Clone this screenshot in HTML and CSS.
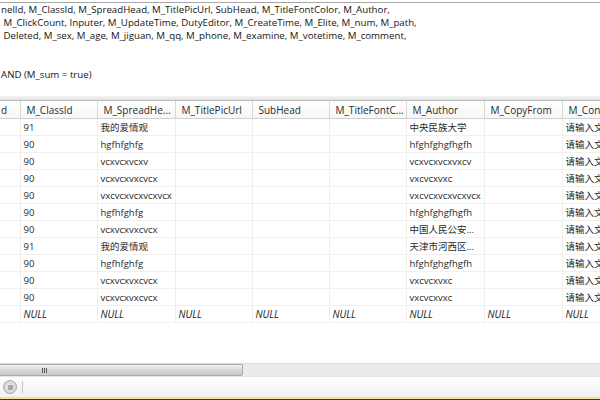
FILE: index.html
```html
<!DOCTYPE html>
<html>
<head>
<meta charset="utf-8">
<link rel="stylesheet" href="styles.css">
</head>
<body>
<div class="app">
  <div class="editor">
    <div class="line">nelId, M_ClassId, M_SpreadHead, M_TitlePicUrl, SubHead, M_TitleFontColor, M_Author,</div>
    <div class="line">&nbsp;M_ClickCount, Inputer, M_UpdateTime, DutyEditor, M_CreateTime, M_Elite, M_num, M_path,</div>
    <div class="line">&nbsp;Deleted, M_sex, M_age, M_jiguan, M_qq, M_phone, M_examine, M_votetime, M_comment,</div>
    <div class="line">&nbsp;</div>
    <div class="line">&nbsp;</div>
    <div class="line">AND (M_sum = true)</div>
  </div>
  <div class="splitter"></div>
  <div class="grid">
    <table>
      <colgroup>
        <col class="c0"><col class="c1"><col class="c2"><col class="c3"><col class="c4"><col class="c5"><col class="c6"><col class="c7"><col class="c8">
      </colgroup>
      <thead>
        <tr><th class="first">d</th><th>M_ClassId</th><th>M_SpreadHe...</th><th>M_TitlePicUrl</th><th>SubHead</th><th>M_TitleFontC...</th><th>M_Author</th><th>M_CopyFrom</th><th>M_Cont</th></tr>
      </thead>
      <tbody>
        <tr><td></td><td>91</td><td>我的爱情观</td><td></td><td></td><td></td><td>中央民族大学</td><td></td><td>请输入文</td></tr>
        <tr><td></td><td>90</td><td>hgfhfghfg</td><td></td><td></td><td></td><td>hfghfghgfhgfh</td><td></td><td>请输入文</td></tr>
        <tr><td></td><td>90</td><td>vcxvcxvcxv</td><td></td><td></td><td></td><td>vcxvcxvcxvxcv</td><td></td><td>请输入文</td></tr>
        <tr><td></td><td>90</td><td>vcxvcxvxcvcx</td><td></td><td></td><td></td><td>vxcvcxvxc</td><td></td><td>请输入文</td></tr>
        <tr><td></td><td>90</td><td>vxcvcxvcxvcxvcx</td><td></td><td></td><td></td><td>vxcvcxvcxvcxvcx</td><td></td><td>请输入文</td></tr>
        <tr><td></td><td>90</td><td>hgfhfghfg</td><td></td><td></td><td></td><td>hfghfghgfhgfh</td><td></td><td>请输入文</td></tr>
        <tr><td></td><td>90</td><td>vcxvcxvxcvcx</td><td></td><td></td><td></td><td>中国人民公安...</td><td></td><td>请输入文</td></tr>
        <tr><td></td><td>91</td><td>我的爱情观</td><td></td><td></td><td></td><td>天津市河西区...</td><td></td><td>请输入文</td></tr>
        <tr><td></td><td>90</td><td>hgfhfghfg</td><td></td><td></td><td></td><td>hfghfghgfhgfh</td><td></td><td>请输入文</td></tr>
        <tr><td></td><td>90</td><td>vcxvcxvxcvcx</td><td></td><td></td><td></td><td>vxcvcxvxc</td><td></td><td>请输入文</td></tr>
        <tr><td></td><td>90</td><td>vcxvcxvxcvcx</td><td></td><td></td><td></td><td>vxcvcxvxc</td><td></td><td>请输入文</td></tr>
        <tr class="null"><td></td><td>NULL</td><td>NULL</td><td>NULL</td><td>NULL</td><td>NULL</td><td>NULL</td><td>NULL</td><td>NULL</td></tr>
      </tbody>
    </table>
  </div>
  <div class="hscroll">
    <div class="thumb"><span class="grip"></span></div>
    <div class="track"></div>
  </div>
  <div class="status">
    <span class="stop"><span class="stop-sq"></span></span>
    <span class="sep"></span>
  </div>
  <div class="accent"></div>
  <div class="footer"></div>
</div>
</body>
</html>
```

FILE: styles.css
```css
html, body {
  margin: 0;
  padding: 0;
  background: #ffffff;
}
.app {
  width: 600px;
  height: 400px;
  display: flex;
  flex-direction: column;
  overflow: hidden;
  font-family: "Open Sans", "Noto Sans CJK SC", sans-serif;
  font-size: 10px;
  color: #2a2a2a;
}
.editor {
  height: 93px;
  margin-top: 2px;
  border-top: 1px solid #a8a8a8;
  background: #fff;
  flex: none;
  overflow: hidden;
  font-size: 9.7px;
  color: #151515;
}
.line {
  height: 13px;
  line-height: 13px;
  white-space: pre;
  padding-left: 1px;
}
.splitter {
  flex: none;
  height: 4px;
  background: linear-gradient(#f4f4f4, #e4e4e4);
  border-bottom: 1px solid #b8b8b8;
}
.grid {
  flex: none;
  height: 262px;
  overflow: hidden;
  background: #fff;
}
table {
  border-collapse: collapse;
  table-layout: fixed;
  width: 600px;
}
.c0 { width: 20px; }
.c1 { width: 77px; }
.c2 { width: 78px; }
.c3 { width: 77px; }
.c4 { width: 77px; }
.c5 { width: 77px; }
.c6 { width: 78px; }
.c7 { width: 78px; }
.c8 { width: 38px; }
th {
  height: 17px;
  padding: 0 0 0 6px;
  text-align: left;
  font-weight: normal;
  color: #2a2a2a;
  background: linear-gradient(#ffffff, #f6f6f6);
  border-right: 1px solid #d8d8d8;
  border-bottom: 1px solid #d0d0d0;
  white-space: nowrap;
  overflow: hidden;
}
th.first {
  padding-left: 1px;
}
td {
  height: 16px;
  padding: 0 0 0 3px;
  border-right: 1px solid #eeeeee;
  border-bottom: 1px solid #f0f0f0;
  white-space: nowrap;
  overflow: hidden;
  color: #2a2a2a;
  font-size: 9.5px;
}
tr.null td {
  font-style: italic;
  color: #222;
  font-size: 10px;
}
.hscroll {
  flex: none;
  height: 12px;
  display: flex;
  background: #ebebeb;
  border-top: 1px solid #dcdcdc;
}
.thumb {
  width: 243px;
  height: 12px;
  border: 1px solid #a9a9a9;
  border-left: none;
  border-radius: 0 2px 2px 0;
  background: linear-gradient(#f2f2f2, #d8d8d8 50%, #c8c8c8);
  display: flex;
  align-items: center;
  padding-left: 42px;
  box-sizing: border-box;
}
.grip {
  width: 5px;
  height: 5px;
  border-left: 1px solid #555;
  border-right: 1px solid #555;
  box-sizing: border-box;
  background: linear-gradient(90deg, transparent 1px, #555 1px, #555 2px, transparent 2px);
}
.track {
  flex: 1;
}
.status {
  flex: none;
  height: 20px;
  background: linear-gradient(#fdfdfd, #f1f1f1);
  display: flex;
  align-items: center;
  padding-left: 3px;
  gap: 5px;
  border-top: 1px solid #e6e6e6;
}
.stop {
  width: 12px;
  height: 12px;
  border-radius: 50%;
  border: 1px solid #a8a8a8;
  background: radial-gradient(#ececec, #cdcdcd);
  display: flex;
  align-items: center;
  justify-content: center;
}
.stop-sq {
  width: 5px;
  height: 5px;
  background: #a8a8a8;
  border-radius: 1px;
}
.sep {
  width: 1px;
  height: 12px;
  background: #c4c4c4;
}
.accent {
  flex: none;
  height: 2px;
  background: #f3dd9f;
}
.footer {
  flex: 1;
  background: #293955;
}
```
